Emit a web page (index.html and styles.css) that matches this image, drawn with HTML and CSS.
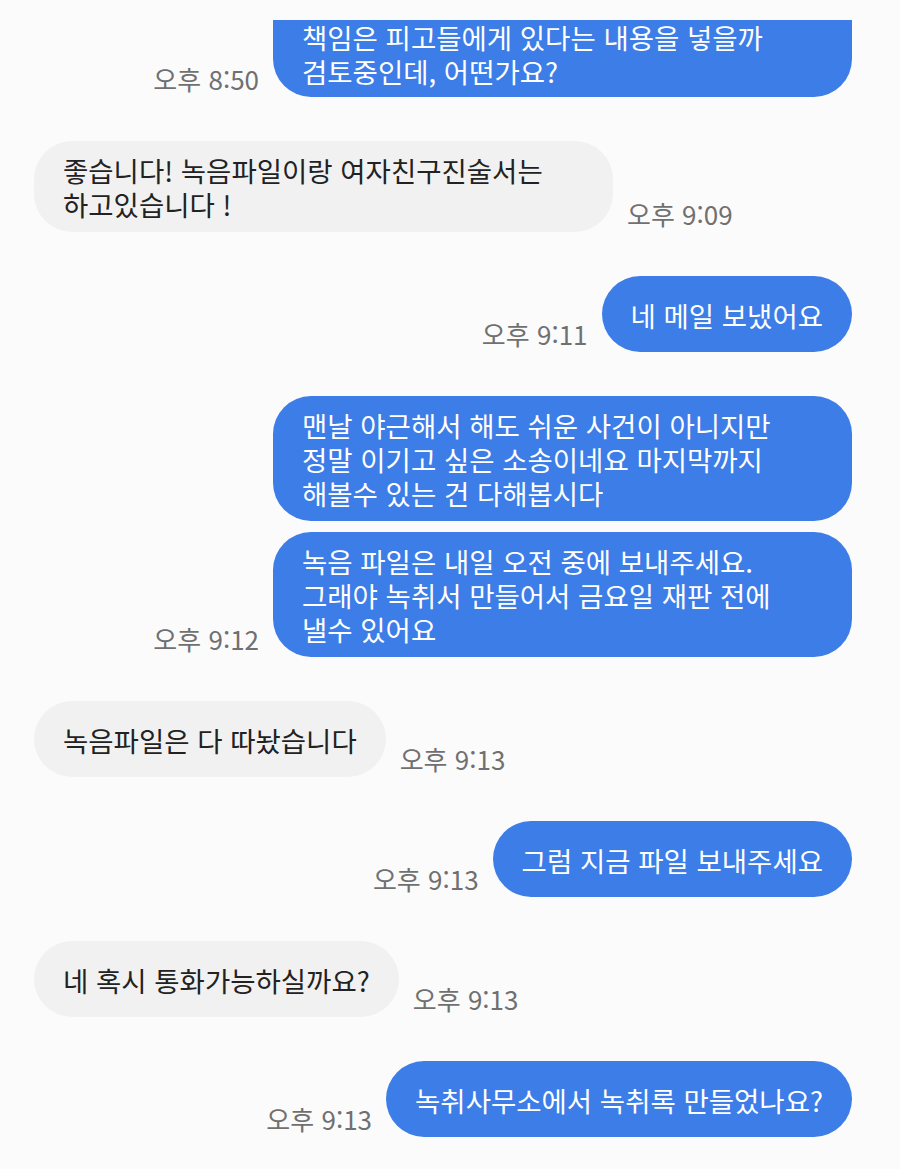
FILE: index.html
```html
<!DOCTYPE html>
<html lang="ko">
<head>
  <meta charset="UTF-8">
  <meta name="viewport" content="width=device-width, initial-scale=1.0">
  <title>대화</title>
  <link rel="stylesheet" href="styles.css">
</head>
<body>
  <div class="chat">
    <div class="row sent first">
      <span class="time">오후 8:50</span>
      <div class="bubble full clipped">책임은 피고들에게 있다는 내용을 넣을까<br>검토중인데, 어떤가요?</div>
    </div>

    <div class="row received">
      <div class="bubble full">좋습니다! 녹음파일이랑 여자친구진술서는<br>하고있습니다 !</div>
      <span class="time">오후 9:09</span>
    </div>

    <div class="row sent">
      <span class="time">오후 9:11</span>
      <div class="bubble">네 메일 보냈어요</div>
    </div>

    <div class="row sent">
      <div class="bubble full">맨날 야근해서 해도 쉬운 사건이 아니지만<br>정말 이기고 싶은 소송이네요 마지막까지<br>해볼수 있는 건 다해봅시다</div>
    </div>
    <div class="row sent same">
      <span class="time">오후 9:12</span>
      <div class="bubble full">녹음 파일은 내일 오전 중에 보내주세요.<br>그래야 녹취서 만들어서 금요일 재판 전에<br>낼수 있어요</div>
    </div>

    <div class="row received">
      <div class="bubble">녹음파일은 다 따놨습니다</div>
      <span class="time">오후 9:13</span>
    </div>

    <div class="row sent">
      <span class="time">오후 9:13</span>
      <div class="bubble">그럼 지금 파일 보내주세요</div>
    </div>

    <div class="row received">
      <div class="bubble">네 혹시 통화가능하실까요?</div>
      <span class="time">오후 9:13</span>
    </div>

    <div class="row sent">
      <span class="time">오후 9:13</span>
      <div class="bubble">녹취사무소에서 녹취록 만들었나요?</div>
    </div>
  </div>
</body>
</html>
```

FILE: styles.css
```css
html, body {
  margin: 0;
  padding: 0;
  background-color: #fbfbfb;
}

body {
  font-family: 'Noto Sans CJK KR', 'Noto Sans', sans-serif;
  color: #222222;
  height: 1169px;
  overflow: hidden;
}

.chat {
  padding: 20px 48px 0 34px;
}

.row {
  display: flex;
  align-items: flex-end;
  gap: 14px;
  margin-top: 44px;
}

.row.first {
  margin-top: 0;
}

.row.same {
  margin-top: 11px;
}

.row.sent {
  justify-content: flex-end;
}

.row.received {
  justify-content: flex-start;
}

.bubble {
  box-sizing: border-box;
  min-height: 76px;
  max-width: 579px;
  padding: 12px 29px 11px;
  border-radius: 38px;
  font-size: 27.5px;
  line-height: 34px;
  display: flex;
  align-items: center;
}

.bubble.full {
  display: block;
  width: 579px;
}

/* list is scrolled, the top of this bubble is off screen */
.bubble.clipped {
  min-height: 0;
  padding-top: 0;
  padding-bottom: 9px;
  border-radius: 0 0 38px 38px;
}

.sent .bubble {
  background-color: #3c7de8;
  color: #ffffff;
}

.received .bubble {
  background-color: #f1f1f1;
  color: #222222;
}

.time {
  font-size: 26px;
  line-height: 32px;
  color: #707070;
  white-space: nowrap;
  margin-bottom: 2px;
}
```
